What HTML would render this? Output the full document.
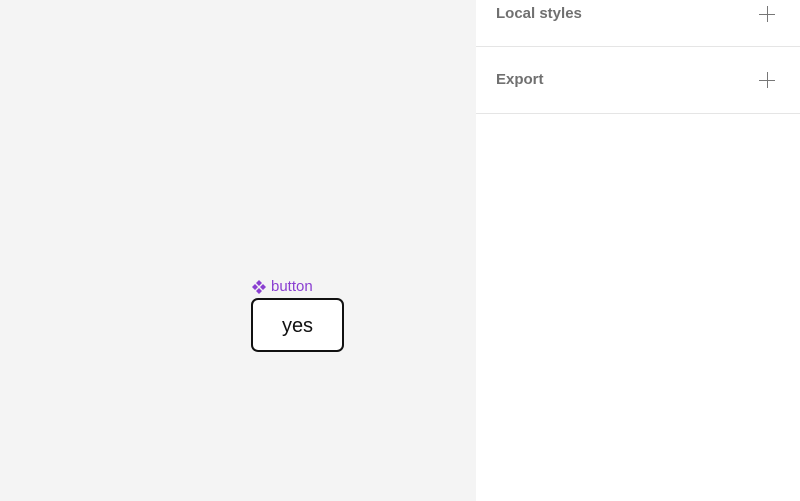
<!DOCTYPE html>
<html><head><style>
body{margin:0;width:800px;height:501px;overflow:hidden;background:#f4f4f4;font-family:"Liberation Sans",sans-serif;position:relative}
.panel{position:absolute;left:476px;top:0;width:324px;height:501px;background:#fff}
.row{position:absolute;left:0;width:324px;border-bottom:1px solid #e5e5e5}
.t{position:absolute;left:20px;font-size:15px;font-weight:bold;color:#707070}
.plus{position:absolute;left:283px;width:16px;height:16px}
.plus:before{content:"";position:absolute;left:0;top:7.5px;width:16px;height:1px;background:#777}
.plus:after{content:"";position:absolute;left:7.5px;top:0;width:1px;height:16px;background:#777}
</style></head><body>
<div class="panel">
<div class="row" style="top:0;height:46px"><div class="t" style="top:5px">Local styles</div><div class="plus" style="top:6px"></div></div>
<div class="row" style="top:47px;height:66px"><div class="t" style="top:24px">Export</div><div class="plus" style="top:25px"></div></div>
</div>
<svg style="position:absolute;left:251px;top:279px" width="16" height="16" viewBox="0 0 16 16" fill="#8a3fd1">
<path d="M8 1l3 3-3 3-3-3z M8 9l3 3-3 3-3-3z M4 5l3 3-3 3-3-3z M12 5l3 3-3 3-3-3z"/></svg>
<div style="position:absolute;left:271px;top:278px;font-size:15px;color:#8a3fd1">button</div>
<div style="position:absolute;left:251px;top:298px;width:89px;height:50px;border:2px solid #111;border-radius:7px;background:#fff;text-align:center;line-height:52px;font-size:20px;color:#111">yes</div>
</body></html>
